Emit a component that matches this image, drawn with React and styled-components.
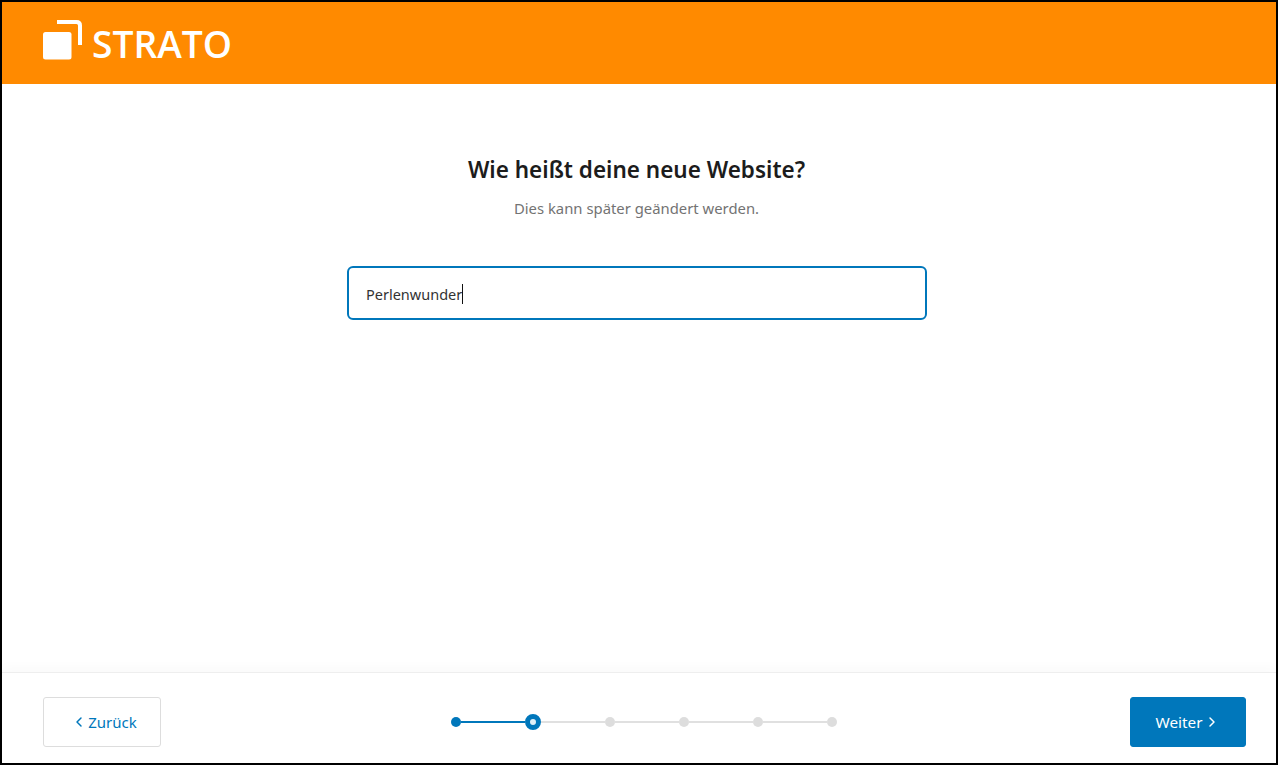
import React from "react";
import styled, { createGlobalStyle } from "styled-components";
import { ChevronLeft, ChevronRight } from "lucide-react";

const GlobalStyle = createGlobalStyle`
  html, body {
    margin: 0;
    padding: 0;
    background: #fff;
  }
  * {
    box-sizing: border-box;
  }
`;

const Frame = styled.div`
  width: 1278px;
  height: 765px;
  display: flex;
  flex-direction: column;
  border: 2px solid #000;
  font-family: "Noto Sans", "Open Sans", sans-serif;
  overflow: hidden;
`;

const Header = styled.header`
  height: 82px;
  flex: none;
  background: #ff8a00;
  padding: 18px 0 0 41px;
`;

const Logo = styled.div`
  display: flex;
  align-items: flex-start;
  gap: 9px;
  color: #fff;
`;

const LogoText = styled.span`
  font-family: "Open Sans", sans-serif;
  font-size: 37.2px;
  font-weight: 600;
  line-height: 40px;
  margin-top: 4px;
`;

const Main = styled.main`
  flex: 1;
  display: flex;
  flex-direction: column;
  align-items: center;
  padding: 69px 5px 0 0;
`;

const Title = styled.h1`
  margin: 0;
  font-size: 22.5px;
  line-height: 34px;
  font-weight: 600;
  color: #1c1c1c;
`;

const Subtitle = styled.p`
  margin: 11px 0 0;
  font-size: 14.85px;
  line-height: 20px;
  color: #737373;
`;

const Field = styled.div`
  width: 580px;
  height: 54px;
  margin-top: 48px;
  margin-left: 1px;
  padding: 2px 17px 0;
  display: flex;
  align-items: center;
  border: 2px solid #0077bb;
  border-radius: 6px;
  font-size: 14.5px;
  color: #333;
`;

const Caret = styled.span`
  width: 1px;
  height: 20px;
  background: #111;
`;

const Footer = styled.footer`
  height: 91px;
  flex: none;
  display: flex;
  align-items: center;
  justify-content: space-between;
  padding: 8px 30px 0 41px;
  border-top: 1px solid #eeeeee;
  box-shadow: 0 -6px 10px rgba(0, 0, 0, 0.02);
`;

const Button = styled.button`
  height: 50px;
  width: ${(props) => (props.$primary ? "116px" : "118px")};
  padding: ${(props) => (props.$primary ? "0" : "0 0 0 4px")};
  display: flex;
  align-items: center;
  justify-content: center;
  gap: ${(props) => (props.$primary ? "2px" : "1px")};
  font-family: inherit;
  font-size: ${(props) => (props.$primary ? "15.3px" : "15px")};
  border-radius: 3px;
  border: 1px solid ${(props) => (props.$primary ? "#0077bb" : "#dddddd")};
  background: ${(props) => (props.$primary ? "#0077bb" : "#fff")};
  color: ${(props) => (props.$primary ? "#fff" : "#0077bb")};
`;

const Steps = styled.div`
  display: flex;
  align-items: center;
  margin-left: -3px;
`;

const Dot = styled.span`
  flex: none;
  width: 10px;
  height: 10px;
  border-radius: 50%;
  background: ${(props) => (props.$done ? "#0077bb" : "#dddddd")};
`;

const CurrentDot = styled.span`
  flex: none;
  width: 16px;
  height: 16px;
  border-radius: 50%;
  background: #dff0f8;
  border: 5px solid #0077bb;
`;

const Line = styled.span`
  flex: none;
  height: 2px;
  width: 64px;
  background: ${(props) => (props.$done ? "#0077bb" : "#e0e0e0")};
`;

function LogoMark() {
  return (
    <svg width="40" height="40" viewBox="0 0 40 40" fill="none">
      <rect x="0" y="12" width="28.5" height="27.5" rx="2.5" fill="#fff" />
      <path d="M14 2H33.5Q37 2 37 5.5V25" stroke="#fff" strokeWidth="4" />
    </svg>
  );
}

export default function App() {
  return (
    <>
      <GlobalStyle />
      <Frame>
        <Header>
          <Logo>
            <LogoMark />
            <LogoText>STRATO</LogoText>
          </Logo>
        </Header>
        <Main>
          <Title>Wie heißt deine neue Website?</Title>
          <Subtitle>Dies kann später geändert werden.</Subtitle>
          <Field>
            Perlenwunder
            <Caret />
          </Field>
        </Main>
        <Footer>
          <Button>
            <ChevronLeft size={16} strokeWidth={2.2} />
            Zurück
          </Button>
          <Steps>
            <Dot $done />
            <Line $done />
            <CurrentDot />
            <Line />
            <Dot />
            <Line />
            <Dot />
            <Line />
            <Dot />
            <Line />
            <Dot />
          </Steps>
          <Button $primary>
            Weiter
            <ChevronRight size={16} strokeWidth={2.2} />
          </Button>
        </Footer>
      </Frame>
    </>
  );
}
